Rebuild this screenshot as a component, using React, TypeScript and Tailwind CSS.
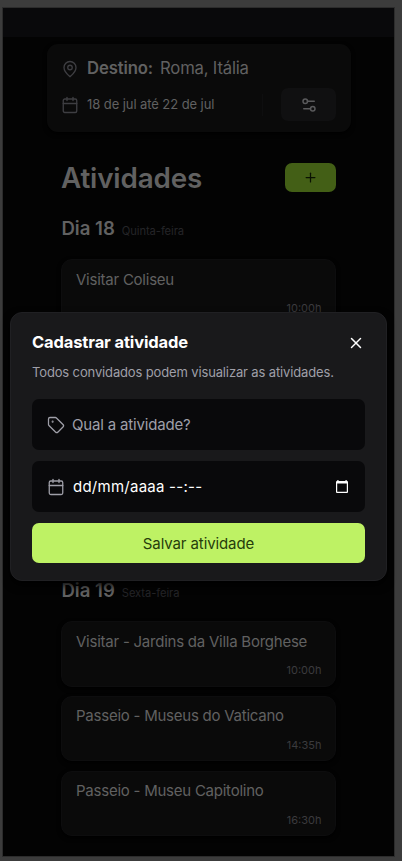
import { Calendar, MapPin, Plus, Settings2, Tag, X } from "lucide-react";

type Activity = { title: string; time: string };

function ActivityCard({ title, time }: Activity) {
  return (
    <div className="flex h-[65.6px] flex-col justify-between rounded-[11px] border border-[#0d0d0e] bg-[#0a0a0a] pt-[8.6px] pr-[13.5px] pb-[7.5px] pl-[14px] shadow-[0_2px_4px_#000]">
      <span className="text-[15px] leading-[22px] tracking-[-0.24px] text-[#616161]">{title}</span>
      <span className="self-end text-[11px] leading-[16px] text-[#3b3b3e]">{time}</span>
    </div>
  );
}

function Day({ day, weekday, activities }: { day: number; weekday: string; activities: Activity[] }) {
  return (
    <section>
      <div className="flex h-[26px] items-baseline gap-[7px] pl-[0.4px]">
        <h2 className="text-[18.6px] leading-[26px] font-semibold text-[#616161]">Dia {day}</h2>
        <span className="text-[11.2px] tracking-[-0.08px] text-[#252528]">{weekday}</span>
      </div>
      <div className="mt-[18px] flex flex-col gap-[9.2px]">
        {activities.map((a) => (
          <ActivityCard key={a.title} {...a} />
        ))}
      </div>
    </section>
  );
}

function Modal() {
  return (
    <div className="absolute top-[312px] left-[10px] h-[269px] w-[377px] rounded-[12px] border border-[#202023] bg-[#19191b] px-[21px] pt-[19px] shadow-[0_4px_8px_#000]">
      <div className="flex h-[21px] items-center justify-between">
        <h2 className="text-[16.5px] leading-[21px] font-bold tracking-[-0.13px] text-white">Cadastrar atividade</h2>
        <X className="mt-px size-[18px] text-white" />
      </div>
      <p className="mt-[9px] text-[13px] leading-[20px] tracking-[-0.14px] whitespace-nowrap text-[#9f9fa8]">
        Todos convidados podem visualizar as atividades.
      </p>
      <div className="mt-[17px] flex h-[51px] items-center gap-[7px] rounded-[7px] bg-[#09090b] px-[15px]">
        <Tag className="size-[18px] text-[#9f9fa8]" strokeWidth={1.7} />
        <span className="pt-[2px] text-[15px] tracking-[-0.17px] text-[#9f9fa8]">Qual a atividade?</span>
      </div>
      <div className="mt-[11px] flex h-[51px] items-center rounded-[7px] bg-[#09090b] px-[15px]">
        <Calendar className="size-[18px] text-[#9f9fa8]" strokeWidth={1.7} />
        <span className="ml-[8px] pt-[2px] text-[15px] tracking-[0.25px] text-white">dd/mm/aaaa --:--</span>
        <svg className="mr-[2px] ml-auto h-[13px] w-[12px]" viewBox="0 0 12 13" fill="#fff">
          <path fillRule="evenodd" d="M1.3 0h1.2v1h7V0h1.2v1H11q1 0 1 1v10q0 1-1 1H1q-1 0-1-1V2q0-1 1-1h.3zM1.2 3.4v8.4h9.6V3.4z" />
        </svg>
      </div>
      <button className="mt-[11px] flex h-[40px] w-full items-center justify-center rounded-[7px] bg-[#bef264] pt-[2px] text-[15px] tracking-[-0.1px] text-[#263d0b]">
        Salvar atividade
      </button>
    </div>
  );
}

export default function App() {
  return (
    <div className="relative h-[861px] w-[402px] overflow-hidden bg-[#3c3c3c] pt-[8px] pl-[3px] font-['Inter',sans-serif]">
      <div className="h-[848px] w-[391px] bg-[#030303] outline-1 outline-[#2c2c2c]">
        <div className="h-[29px] bg-[#09090b]" />
        <div className="pt-[7px] pl-[43.5px]">
          <header className="h-[88px] w-[304px] rounded-[11px] bg-[#0a0a0a] pt-[13px] pr-[14.5px] pl-[14.5px] shadow-[0_2px_4px_#000]">
            <div className="flex h-[24px] items-center">
              <MapPin className="size-[18px] text-[#3e3e42]" strokeWidth={1.8} />
              <span className="ml-[8px] text-[16.7px] font-semibold tracking-[-0.12px] text-[#616161]">Destino:</span>
              <span className="ml-[7px] text-[16.7px] tracking-[-0.2px] text-[#616161]">Roma, Itália</span>
            </div>
            <div className="mt-[7px] flex h-[33px] items-center">
              <Calendar className="size-[18px] text-[#3e3e42]" strokeWidth={1.8} />
              <span className="ml-[8px] text-[13px] tracking-[-0.08px] text-[#616161]">18 de jul até 22 de jul</span>
              <div className="ml-auto h-[22px] w-px bg-[#0e0e0f]" />
              <button className="ml-[18px] flex h-[33px] w-[55px] items-center justify-center rounded-[7px] bg-[#101011] text-[#5a5a5c]">
                <Settings2 className="size-[18px]" />
              </button>
            </div>
          </header>
        </div>
        <main className="ml-[58px] w-[275px]">
          <div className="mt-[26px] flex h-[38px] items-center justify-between">
            <h1 className="pt-[2px] text-[27.8px] leading-[38px] font-semibold tracking-[-0.15px] text-[#616161]">
              Atividades
            </h1>
            <button className="flex h-[29px] w-[51px] items-center justify-center rounded-[7px] bg-[#435f16] text-[#0a1202]">
              <Plus className="size-[15px]" />
            </button>
          </div>
          <div className="mt-[19px]">
            <Day day={18} weekday="Quinta-feira" activities={[{ title: "Visitar Coliseu", time: "10:00h" }]} />
          </div>
          <div className="mt-[252.4px]">
            <Day
              day={19}
              weekday="Sexta-feira"
              activities={[
                { title: "Visitar - Jardins da Villa Borghese", time: "10:00h" },
                { title: "Passeio - Museus do Vaticano", time: "14:35h" },
                { title: "Passeio - Museu Capitolino", time: "16:30h" },
              ]}
            />
          </div>
        </main>
      </div>
      <Modal />
    </div>
  );
}
